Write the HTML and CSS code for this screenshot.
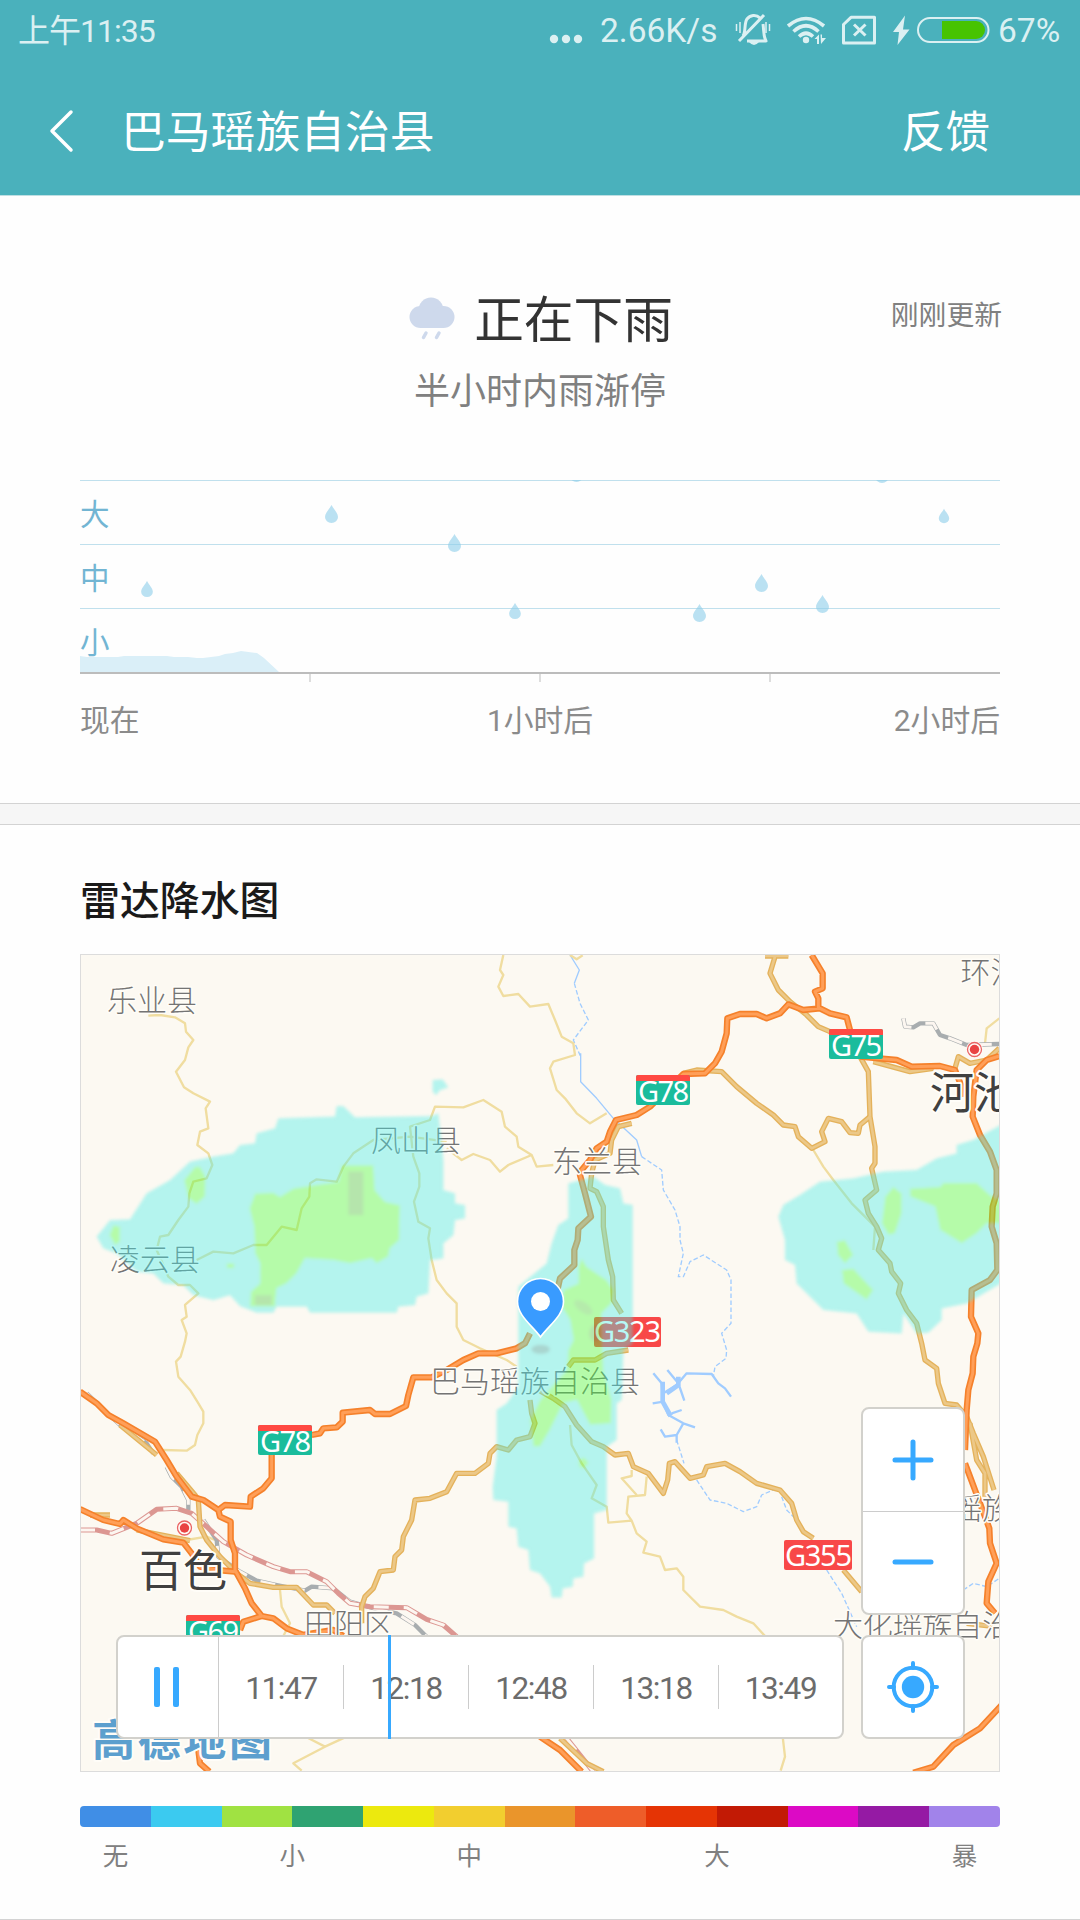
FILE: index.html
```html
<!DOCTYPE html>
<html lang="zh-CN">
<head>
<meta charset="utf-8">
<title>巴马瑶族自治县</title>
<link rel="stylesheet" href="styles.css">
</head>
<body>
<header class="header">
  <div class="status">
    <span class="clock">上午11:35</span>
    <div class="status-right">
      <svg class="dots" width="34" height="30" viewBox="549 15 34 30"><circle cx="554" cy="39" r="4.2"/><circle cx="566" cy="39" r="4.2"/><circle cx="578" cy="39" r="4.2"/></svg>
      <span class="speed">2.66K/s</span>
      <svg class="bell" width="36" height="34" viewBox="735 13 36 34">
        <path class="line" d="M743 36c3-4 1-13 4-17 3-4 9-5 13-1M763 24c1 6 0 11 3 17H747M739 41L764 15"/>
        <path class="thin" d="M736.500 24v7M740 22v11M766 22v11M769.500 24v7"/>
        <path d="M749 42h10q-5 6-10 0z"/>
      </svg>
      <svg class="wifi" width="40" height="30" viewBox="786 15 40 30">
        <g class="wave"><path d="M788 26Q806 11 824 26"/><path d="M793.500 31.500Q806 20 818.500 31.500"/><path d="M799 36.500Q806 30 813 36.500"/></g>
        <circle cx="806" cy="40" r="3.200"/><path d="M814.500 39L819 34.500V44H817V39zM820.500 34.500H822V38H826L821 44z"/>
      </svg>
      <svg class="sim" width="36" height="30" viewBox="841 14 36 30"><path class="line" d="M843.500 42V23.500L851 16.300H874.500V42z"/><path class="cross" d="M854 23.500L865.500 34.500M865.500 23.500L854 34.500"/></svg>
      <svg class="bolt" width="18" height="30" viewBox="892 15 18 30"><path d="M905 15.500L893 32H899L897.500 45L909.500 29.500H903z"/></svg>
      <svg class="battery" width="73" height="28" viewBox="917 16 73 28"><rect class="shell" x="918" y="18" width="70.500" height="24" rx="12"/><path class="charge" d="M942 21H976A9 9 0 0 1 976 39H942z"/></svg>
      <span class="percent">67%</span>
    </div>
  </div>
  <div class="nav">
    <svg class="back" width="26" height="44" viewBox="0 0 26 44"><path d="M22 3L3 22L22 41"/></svg>
    <h1>巴马瑶族自治县</h1>
    <span class="feedback">反馈</span>
  </div>
</header>

<section class="forecast">
  <div class="now">
    <svg width="46" height="44" viewBox="0 0 46 44"><g class="cloud"><circle cx="11.500" cy="20" r="11"/><circle cx="22" cy="13" r="12.500"/><circle cx="34.500" cy="20" r="11"/><rect x="11" y="15" width="24" height="16"/></g><path class="rain" d="M17 36L14.500 40.500M30 36L27.500 40.500"/></svg>
    <h2>正在下雨</h2>
    <span class="updated">刚刚更新</span>
  </div>
  <p class="summary">半小时内雨渐停</p>
  <svg class="chart" width="920" height="204" viewBox="80 480 920 204">
    <defs><path id="drop" d="M0-9C-2-5-6.500-1-6.500 3A6.500 6 0 0 0 6.500 3C6.500-1 2-5 0-9z"/></defs>
    <path class="area" d="M80 656L87 657H118L124 656H167L174 657H188L197 658H203L219 656L225 654L233 653L241 651L257 653L264 658L279 672V673H80z"/>
    <path class="grid" d="M80 480.500H1000M80 544.500H1000M80 608.500H1000"/>
    <path class="axis" d="M80 673H1000"/><path class="ticks" d="M310 674V682M540 674V682M770 674V682"/>
    <g class="drops">
      <use href="#drop" transform="translate(147 589) scale(.9)"/><use href="#drop" x="331.500" y="514"/><use href="#drop" x="454.500" y="543"/>
      <use href="#drop" transform="translate(515 611) scale(.9)"/><use href="#drop" x="576.500" y="473"/><use href="#drop" x="699.500" y="613"/>
      <use href="#drop" x="761.500" y="583"/><use href="#drop" x="822.500" y="604"/><use href="#drop" x="882" y="474"/>
      <use href="#drop" transform="translate(944 516) scale(.8)"/>
    </g>
    <g class="levels"><text x="80" y="525">大</text><text x="80" y="589">中</text><text x="80" y="653">小</text></g>
  </svg>
  <div class="hours"><span>现在</span><span>1小时后</span><span>2小时后</span></div>
</section>

<section class="radar">
  <h3>雷达降水图</h3>
  <div class="map">
    <svg class="tiles" width="918" height="816" viewBox="81 955 918 816">
      <defs>
        <filter id="soften"><feGaussianBlur stdDeviation="5"/></filter>
        <g id="minor">
          <g transform="translate(60 860) scale(.33333)">
            <path d="M265 467L300 465L345 472L375 490L378 515L400 540L385 562L375 600L348 635L372 682L400 700L450 725L437 745L445 805L420 815L412 855L445 880L457 915L440 955L400 965L388 1000L385 1040L355 1080L325 1125L300 1130L290 1170L325 1250L355 1275L390 1275L415 1300L375 1335L380 1370L365 1380L380 1420L375 1445L362 1490L348 1505L355 1550L390 1590L412 1625L430 1655L430 1690L412 1725L405 1755L380 1772L310 1770"/>
            <path d="M1330 285L1320 330L1330 345L1315 380L1330 408L1375 402L1410 440L1465 432L1485 480L1505 530L1540 550L1545 585L1480 605L1470 625L1490 690L1515 715L1550 760L1590 790L1640 760"/>
            <path d="M1160 865L1205 900L1240 882L1290 900L1320 935L1345 915L1415 885L1375 860L1370 830L1335 800L1325 755L1270 720L1210 742L1125 740L1110 780L1050 800L1060 890L1078 940L1078 980L1062 1025L1075 1085L1110 1105L1105 1135L1115 1200L1130 1260L1160 1300L1190 1330L1190 1400L1210 1440L1260 1465L1340 1500L1370 1520M1415 885L1430 920L1480 915"/>
            <path d="M1160 845L1050 830L940 840L880 880L850 920L830 965L770 958L750 970L748 1010L725 1045L710 1110L665 1100L620 1155L580 1155L520 1180L460 1175L410 1200"/>
          </g>
          <g transform="translate(540 940) scale(.33333)"><path d="M820 630L850 680L880 720L935 790L1005 860L1000 930M1378 235L1340 265L1335 310M90 45L110 58L128 46"/></g>
          <g transform="translate(60 1340) scale(.33333)"><path d="M740 1192L795 1220L700 1270L725 1292M795 1220L855 1192M660 750L665 800L690 850L670 888M380 600L440 590L465 600"/></g>
          <g transform="translate(540 1340) scale(.33333)"><path d="M90 255L95 315L125 370L170 435L155 475L200 500L205 548L275 542L260 520L265 470L315 465L320 410M275 390V408L245 415L290 465M275 542L290 580L320 605L310 638L360 650L375 690L410 685L430 710L430 750L480 800L550 810L590 830L640 850L675 888M728 1190L735 1250L722 1292"/></g>
        </g>
        <g id="trunk">
          <g transform="translate(540 940) scale(.33333)">
            <path d="M675 48H745M705 50L690 100L715 150L750 185L800 225L835 260L870 275L960 350L985 395L990 530L1005 620L1005 670L995 685L1010 750L975 780L985 820L1010 860L1025 895L1015 930L1050 970L1055 995L1082 1030L1075 1060L1100 1110L1130 1150L1145 1210L1155 1260L1190 1285L1195 1330L1215 1390L1250 1395L1280 1430L1300 1480L1330 1550L1362 1650M1290 1450L1310 1560L1335 1600L1335 1670"/>
            <path d="M430 400L470 390L545 395L590 440L650 490L700 525L730 555L765 560L775 590L815 625L855 605L845 575L865 535L905 545L930 578L955 580L960 555L990 530M1000 365L1110 395L1180 385M1245 385L1255 350L1290 370L1340 360L1378 325"/>
            <path d="M275 550L235 560L215 600L210 640L165 660L155 700L150 745L170 755L190 800L190 860L205 960L218 1010L220 1080L245 1120M265 1230L200 1240L165 1260H100L85 1280"/>
          </g>
          <g transform="translate(540 1340) scale(.33333)"><path d="M-5 150L40 175L75 200L110 255L155 305L190 320L225 345L265 340L280 380L325 400L370 460L383 420L388 370L405 365L450 415L490 405L500 380L555 370L600 395L650 430L720 450L755 490L770 540L790 575L820 595M910 690L965 755M60 1195L140 1270L190 1295M1280 850L1365 860"/></g>
          <g transform="translate(60 1340) scale(.33333)"><path d="M1410 180L1415 220L1425 250L1410 290L1370 300L1345 330L1310 320L1290 340L1285 370L1245 400H1190L1160 455L1110 475L1065 480L1055 540L1030 590L1025 630L1005 650L1000 690L960 695L940 745L915 770L905 800V850M180 255L290 345M350 400L405 465L415 480L420 560L440 600L480 650L530 700L570 730L640 742H710L760 795H800L825 820M90 525H150M230 570L390 602"/></g>
        </g>
        <g id="highway">
          <g transform="translate(540 940) scale(.33333)">
            <path d="M815 45L830 70L848 100V145L825 155L835 175V205M960 350L1070 360L1115 380L1200 378L1245 390L1265 440L1268 470M930 270L920 232L870 220L840 205L790 210L745 193L720 220L680 235L650 222L600 222L562 235L560 280L545 335L525 370L495 400L430 402L330 500L290 525L228 540L210 575L200 605L170 625L150 660L125 690L120 705L135 760L153 830L115 865L113 900L103 930V975L60 1015L50 1060"/>
            <path d="M1378 348L1340 360L1310 390L1300 470L1298 530L1320 585L1350 635L1370 690V760L1358 800L1355 860L1370 910L1372 990L1350 1020L1295 1050L1293 1130L1315 1180L1312 1210L1300 1250L1298 1300L1285 1350L1280 1410L1275 1530M1275 1570L1290 1610L1305 1650L1335 1730L1348 1765L1350 1810L1370 1870L1345 1925L1340 1990L1365 2020"/>
          </g>
          <g transform="translate(540 1340) scale(.33333)"><path d="M1385 1095L1320 1165L1240 1215L1180 1280L1120 1298M0 1190L60 1230L125 1295"/></g>
          <g transform="translate(60 1340) scale(.33333)">
            <path d="M60 155L110 190L145 225L190 250L285 305L320 360L350 410L395 470L430 480L475 510L480 530L512 545V600L525 640V690L555 745L575 790L605 828L640 835L680 865L730 885L820 870L850 888M475 510L495 495L570 500L572 470L610 445L635 415V345M755 285L780 280L790 265L830 262L848 245V218L930 210L945 222H990L1038 198L1045 165L1060 112H1115L1160 90L1210 60L1255 40H1310L1370 25L1395 10L1410 -20"/>
            <path d="M60 507L130 540L180 552L190 540L230 565L310 598L370 608L395 640L420 680L470 690L525 695M605 828L550 845L540 870M410 1190L420 1270L448 1295"/>
          </g>
        </g>
        <g id="rail">
          <path transform="translate(60 1340) scale(.33333)" d="M80 160L180 255L260 310L280 340M320 380L335 410L365 440L385 480V510M430 540L470 600L475 650L540 695L590 722L650 735L735 752L755 740L820 745L870 785L960 810L1010 820L1065 855L1100 890"/>
          <path transform="translate(540 940) scale(.33333)" d="M1090 235L1095 260L1120 262L1140 250H1180L1200 285L1230 295L1280 315L1378 312"/>
        </g>
        <g id="express">
          <path transform="translate(60 1340) scale(.33333)" d="M60 570H110L155 580L230 550L290 508L350 505L395 520L440 560L490 605L560 645L640 680L690 695H740L800 725L835 760L870 790L930 800L1040 803L1100 838L1150 855L1190 890M1520 1195L1600 1295"/>
        </g>
      </defs>
      <g class="river" transform="translate(540 940) scale(.33333)">
        <path d="M90 45L118 90L103 130M122 340V425L170 475L220 535L290 600L305 650"/>
        <path class="broken" d="M103 130L120 190L145 240L100 300L122 350M305 650L365 690L370 750L405 810L420 860V900L430 940L415 1010H430L450 965L490 945L560 990L573 1020V1150L545 1180L560 1230L558 1255L525 1280L520 1310M410 1500L432 1570M470 1620L510 1680L560 1690L610 1715L650 1700L665 1665L700 1650M725 1670L740 1710L770 1740M860 1890L905 1960L950 2060M1270 1950L1300 1930L1340 1940L1378 1915"/>
        <path class="lake" d="M340 1300L365 1330L370 1390L385 1425L430 1450L465 1462M430 1450L410 1485L375 1490L362 1468M410 1485V1508M370 1360L410 1335L440 1300L515 1302L535 1330L555 1345L573 1370M382 1290L415 1330L422 1350L433 1382M338 1390L370 1385M395 1420L425 1410"/>
        <path class="basin" d="M368 1325V1385L392 1428M415 1310V1335L380 1360"/>
      </g>
      <use href="#minor" class="minor"/>
      <use href="#rail" class="rail"/><use href="#rail" class="rail-gap"/>
      <use href="#express" class="express"/><use href="#express" class="rail-gap"/>
      <use href="#trunk" class="trunk"/><use href="#trunk" class="trunk-core"/>
      <use href="#highway" class="highway"/><use href="#highway" class="highway-core"/>

      <g class="places">
        <text x="107" y="1011">乐业县</text><text x="371" y="1151">凤山县</text><text x="110" y="1270">凌云县</text>
        <text x="552" y="1172">东兰县</text><text x="960.500" y="983">环江</text><text x="430" y="1392" textLength="210">巴马瑶族自治县</text>
        <text x="304" y="1635">田阳区</text><text x="833" y="1636" textLength="209">大化瑶族自治县</text><text x="952" y="1519">瑶族</text>
      </g>
      <g class="city"><text x="930" y="1109">河池</text><text x="139" y="1587">百色</text></g>
      <g class="stop"><circle class="halo" cx="974.500" cy="1049.500" r="8.500"/><circle class="ring" cx="974.500" cy="1049.500" r="7"/><circle cx="974.500" cy="1049.500" r="4.700"/><circle class="halo" cx="184.500" cy="1528" r="8.500"/><circle class="ring" cx="184.500" cy="1528" r="7"/><circle cx="184.500" cy="1528" r="4.700"/></g>
      <g class="shields">
        <g class="national"><rect x="636" y="1075" width="54" height="30" rx="2"/><rect x="829" y="1029" width="54" height="30" rx="2"/><rect x="258" y="1425" width="54" height="30" rx="2"/><rect x="186" y="1615" width="54" height="30" rx="2"/></g>
        <path class="cap" d="M636 1081V1077Q636 1075 638 1075H688Q690 1075 690 1077V1081zM829 1035V1031Q829 1029 831 1029H881Q883 1029 883 1031V1035zM258 1431V1427Q258 1425 260 1425H310Q312 1425 312 1427V1431zM186 1621V1617Q186 1615 188 1615H238Q240 1615 240 1617V1621z"/>
        <g class="provincial"><rect x="594" y="1317" width="67" height="30" rx="2"/><rect x="784" y="1540" width="68" height="30" rx="2"/></g>
        <g class="codes"><text x="638" y="1102" textLength="51">G78</text><text x="831" y="1056" textLength="51">G75</text><text x="260" y="1452" textLength="51">G78</text><text x="188" y="1642" textLength="51">G69</text><text x="594" y="1342" textLength="67">G323</text><text x="785" y="1566" textLength="67">G355</text></g>
      </g>
      <text class="brand" x="92" y="1756" textLength="180">高德地图</text>

      <g class="echo">
        <g transform="translate(60 860) scale(.33333)" filter="url(#soften)">
          <path class="light" d="M110 1130L150 1080L210 1078L260 1000L330 960L390 905L460 890L520 880L540 855L585 850L590 820L645 805L655 775L825 770L830 738H850L885 772L1115 768L1135 760L1150 900V990L1185 1000V1030L1215 1035V1075L1185 1080L1180 1125L1150 1150V1195L1110 1200L1105 1300L1070 1310L1065 1335L1015 1340L1010 1358H750L740 1340H650L640 1358H590L540 1338L510 1305L460 1320L400 1305L370 1275L310 1270L280 1240L230 1235L170 1180L130 1165zM1118 660L1148 658L1165 682L1140 690L1128 705L1118 695z"/>
          <path class="mid" d="M585 1000L640 998L660 1010L700 985L760 975L835 965L845 915H940L945 990L975 1025L1020 1035L1018 1140L990 1165L985 1190L950 1210L935 1195L870 1210L820 1200L735 1195L710 1240L680 1270L650 1285L645 1340H570L572 1295L600 1270V1210L585 1180L582 1100L568 1045zM405 920H420L437 950L435 1010L410 1032L385 1015L372 960zM160 1095L180 1100V1145L165 1155L148 1125zM500 1210H522V1224H500z"/>
          <path class="dense" d="M865 935H910V1065H865zM585 1305H635V1335H585z"/>
        </g>
        <g transform="translate(480 1170) scale(.33333)" filter="url(#soften)">
          <path class="light" d="M265 40L340 20L375 45L420 55L430 100L458 105V520L430 540L425 690L410 700V810L380 830V1020L342 1030V1165L312 1180L310 1220L280 1225L278 1250L248 1255L245 1282H215L210 1250L180 1210L150 1200L145 1140L115 1130L110 1075L85 1070V995L40 990L38 950L50 860V720L80 700L115 650V350L200 280L215 220L235 165L265 145z"/>
          <path class="mid" d="M305 265L320 290L380 330L400 360L395 400L365 430L370 600L395 690L393 760L330 765L290 690L250 700L210 780L180 830H160L150 750L180 690L260 600L265 540L280 510L270 450L245 410L250 360L295 340V290zM296 870L312 862L326 878L312 896L298 890z"/>
          <g class="dense"><ellipse cx="310" cy="412" rx="32" ry="15" opacity=".7" transform="rotate(35 310 412)"/><ellipse class="deep" cx="182" cy="538" rx="28" ry="14"/><ellipse cx="345" cy="490" rx="18" ry="25"/></g>
        </g>
        <g transform="translate(540 940) scale(.33333)" filter="url(#soften)">
          <path class="light" d="M1400 545L1300 600L1250 615V640L1190 655L1130 690L1030 695L940 715L840 725L780 765L730 795L715 830L735 900V960L765 975L770 1030L850 1110L950 1120L985 1175L1085 1180L1090 1120L1130 1180L1165 1178L1205 1140V1105L1280 1090L1400 1020z"/>
          <path class="mid" d="M1110 745L1200 740L1210 728H1310L1350 765L1400 790V850H1340L1310 880L1265 910L1200 870L1185 800L1110 770zM1060 740L1085 760V820L1065 880L1045 885L1025 850L1035 770zM890 905L915 900L940 945L915 970L893 945zM905 990L940 985L1000 1050L980 1080L910 1030z"/>
        </g>
      </g>
      <g class="pin"><path d="M540.500 1337C533 1326 517.500 1316 517.500 1301.500A23 23 0 0 1 563.500 1301.500C563.500 1316 548 1326 540.500 1337z"/><circle cx="540.500" cy="1301.500" r="9.500"/></g>
    </svg>
    <div class="controls">
      <div class="timeline">
        <div class="pause"><i></i><i></i></div>
        <span>11:47</span><span>12:18</span><span>12:48</span><span>13:18</span><span>13:49</span>
        <div class="playhead"></div>
      </div>
      <div class="buttons">
        <div class="zoom">
          <div class="btn"><svg width="42" height="42" viewBox="0 0 42 42"><path d="M3 21H39M21 3V39"/></svg></div>
          <div class="btn"><svg width="42" height="42" viewBox="0 0 42 42"><path d="M3 21H39"/></svg></div>
        </div>
        <div class="locate"><svg width="54" height="54" viewBox="0 0 54 54"><circle class="ring" cx="27" cy="27" r="19.300"/><circle class="dot" cx="27" cy="27" r="11.200"/><path d="M27 3V8M27 46V51M3 27H8M46 27H51"/></svg></div>
      </div>
    </div>
  </div>
  <div class="scale"><i class="s1"></i><i class="s2"></i><i class="s3"></i><i class="s4"></i><i class="s5"></i><i class="s6"></i><i class="s7"></i><i class="s8"></i><i class="s9"></i><i class="s10"></i><i class="s11"></i><i class="s12"></i><i class="s13"></i></div>
  <div class="legend"><span class="none">无</span><span class="small">小</span><span class="medium">中</span><span class="large">大</span><span class="storm">暴</span></div>
</section>
</body>
</html>
```
FILE: styles.css
```css
* { box-sizing: border-box; margin: 0; padding: 0; }
body { width: 1080px; height: 1920px; display: flex; flex-direction: column; background: #fefefe; font-family: "Noto Sans CJK SC", sans-serif; font-weight: 400; color: #808080; overflow: hidden; border-bottom: 1px solid #d3d3d3; }
svg { display: block; flex: none; }
h1, h2, h3 { font-weight: inherit; white-space: nowrap; }

.header { height: 196px; flex: none; background: #4ab1bc; color: #fff; border-bottom: 1px solid #bfdfe3; }
.status { height: 64px; display: flex; justify-content: space-between; padding: 0 18px 4px 18px; color: #dbf0f2; }
.status span { line-height: 60px; padding-top: 1px; font-family: Roboto, "Noto Sans CJK SC", sans-serif; font-weight: 400; font-size: 33.5px; white-space: nowrap; }
.status .clock { font-size: 32px; letter-spacing: -1px; }
.status-right { display: flex; align-items: center; }
.status-right svg { fill: #dbf0f2; }
.status-right .speed { width: 118px; margin-left: 17px; }
.status-right .percent { width: 64px; margin-left: 8px; }
.bell { margin-left: 17px; }
.wifi { margin-left: 15px; }
.sim { margin-left: 15px; }
.bolt { margin-left: 15px; }
.battery { margin-left: 7px; }
.line { fill: none; stroke: #dbf0f2; stroke-width: 3; stroke-linejoin: round; }
.thin { stroke: #dbf0f2; stroke-width: 1.5; }
.wave { fill: none; stroke: #dbf0f2; stroke-width: 3.6; }
.cross { stroke: #dbf0f2; stroke-width: 3; }
.shell { fill: none; stroke: #dbf0f2; stroke-width: 2; }
.charge { fill: #47c302; }
.nav { height: 130px; display: flex; align-items: center; padding: 0 90px 0 49px; font-size: 44.5px; }
.back { margin-top: 4px; fill: none; stroke: #fff; stroke-width: 3.5; stroke-linecap: round; stroke-linejoin: round; }
.nav h1 { margin-left: 46px; font-size: 44.8px; line-height: 64px; }
.feedback { margin-left: auto; line-height: 64px; }

.forecast { height: 607px; flex: none; padding: 89px 80px 0; }
.now { height: 62px; display: flex; align-items: center; justify-content: center; position: relative; }
.now svg { margin: 5px 0 0 2px; }
.cloud { fill: #ced9ec; }
.rain { stroke: #ced9ec; stroke-width: 3.5; stroke-linecap: round; }
.now h2 { font-size: 49.7px; line-height: 62px; margin-left: 19px; color: #333; }
.updated { position: absolute; right: -2px; top: 8px; font-size: 27.8px; line-height: 40px; }
.summary { margin-top: 16px; font-size: 36px; line-height: 50px; text-align: center; }
.chart { margin-top: 67px; }
.area { fill: #daeff8; }
.grid { stroke: #c0e0ed; }
.axis { stroke: #bcbcbc; stroke-width: 2; }
.ticks { stroke: #ddd; stroke-width: 2; }
.drops { fill: #8ccdea; fill-opacity: .6; }
.levels { fill: #72b5d3; font-size: 29.5px; }
.hours { display: grid; grid-template-columns: 1fr 1fr 1fr; margin-top: 15px; font-family: Roboto, "Noto Sans CJK SC", sans-serif; font-size: 29.8px; line-height: 44px; color: #8b8b8b; text-align: center; }
.hours span:first-child { text-align: left; }
.hours span:last-child { text-align: right; }

.radar { flex: 1; padding: 48px 80px 0; border-top: 1px solid #d3d3d3; }
.radar::before { content: ""; display: block; height: 20px; margin: -48px -80px 48px; background: #f6f6f6; border-bottom: 1px solid #d3d3d3; }
.radar h3 { font-size: 39.9px; line-height: 50px; font-weight: 500; color: #1a1a1a; }
.map { position: relative; width: 920px; height: 818px; margin-top: 31px; border: 1px solid #dcdcdc; background: #fcf9f2; overflow: hidden; }
.tiles use, .river path { fill: none; stroke-linejoin: round; }
.river { stroke: #a0ccff; stroke-width: 4; fill: none; }
.river .broken { stroke-width: 4; stroke-dasharray: 14 7; }
.river .lake { stroke-width: 7; }
.river .basin { stroke-width: 14; }
.minor { stroke: #f0dda0; stroke-width: 7; }
.rail { stroke: #a8adaf; stroke-width: 13; }
.express { stroke: #dc9792; stroke-width: 15; }
.rail-gap { stroke: #fcf6f0; stroke-width: 9; stroke-dasharray: 45; }
.trunk { stroke: #e4b25b; stroke-width: 16; }
.trunk-core { stroke: #ecc888; stroke-width: 8; }
.highway { stroke: #f5812b; stroke-width: 19; }
.highway-core { stroke: #ff9f58; stroke-width: 9; }
.places, .city, .brand { stroke: #fffdf8; paint-order: stroke; stroke-linejoin: round; }
.places { fill: #747474; font-size: 30px; font-weight: 300; stroke-width: 3px; }
.city { fill: #404040; font-size: 44px; stroke-width: 4px; }
.brand { fill: #5c9fce; font-size: 43px; font-weight: 700; stroke-width: 4px; }
.stop { fill: #e94343; }
.stop .halo { fill: #fffaf5; }
.stop .ring { fill: none; stroke: #ea6565; stroke-width: 1.3; }
.national { fill: #1abc9c; }
.provincial { fill: #f84848; }
.cap { fill: #ff4a43; }
.codes { fill: #fff; font-family: "Noto Sans", sans-serif; font-size: 29px; font-weight: 400; }
.echo { opacity: .4; }
.light { fill: #4aede8; }
.mid { fill: #4bff3e; }
.dense { fill: #4bc844; }
.deep { fill: #2da39e; }
.pin { fill: #399bff; }
.pin path { stroke: #fff; stroke-width: 1.6; }
.pin circle { fill: #fff; }

.controls { position: absolute; left: 35px; right: 34px; bottom: 32px; display: flex; align-items: flex-end; justify-content: space-between; }
.timeline { position: relative; width: 728px; height: 104px; display: flex; align-items: center; background: #fff; border: 2px solid #d2d1cc; border-radius: 8px; }
.pause { flex: none; width: 101px; height: 100%; display: flex; gap: 13px; align-items: center; justify-content: center; padding-right: 3px; border-right: 1px solid #ccc; }
.pause i { width: 6px; height: 40px; border-radius: 2px; background: #37a9ff; }
.timeline span { flex: none; width: 125px; height: 44px; line-height: 47px; text-align: center; font-family: Roboto, sans-serif; font-size: 31.5px; letter-spacing: -1.4px; color: #6c6c6c; border-right: 1px solid #ccc; }
.timeline span:nth-of-type(5) { width: 123px; border-right: none; }
.playhead { position: absolute; left: 270px; top: -2px; width: 3px; height: 104px; background: #37a9ff; }
.buttons { display: flex; flex-direction: column; gap: 20px; }
.zoom, .locate { width: 104px; background: #fff; border: 2px solid #d2d1cc; border-radius: 8px; }
.zoom { height: 208px; display: flex; flex-direction: column; }
.btn { flex: 1; display: flex; align-items: center; justify-content: center; }
.btn:first-child { border-bottom: 1px solid #ccc; }
.btn path, .locate path, .locate .ring { fill: none; stroke: #37a9ff; stroke-width: 5; stroke-linecap: round; }
.locate { height: 104px; display: flex; align-items: center; justify-content: center; }
.locate path, .locate .ring { stroke-width: 4; }
.dot { fill: #37a9ff; }

.scale { display: flex; height: 21px; margin-top: 34px; border-radius: 4px; overflow: hidden; }
.scale i { flex: 1; }
.s1 { background: #408ee6; } .s2 { background: #3bcaf0; } .s3 { background: #a0e242; } .s4 { background: #2fa372; }
.s5 { background: #ece90e; } .s6 { background: #f2ce2f; } .s7 { background: #ea952b; } .s8 { background: #ee5d29; }
.s9 { background: #e53405; } .s10 { background: #c21a05; } .s11 { background: #dc0ac5; } .s12 { background: #951aa4; } .s13 { background: #a183ea; }
.legend { display: grid; grid-template-columns: repeat(26, 1fr); margin-top: 9px; font-size: 25.500px; line-height: 36px; text-align: center; }
.none { grid-column: 1 / 3; } .small { grid-column: 6 / 8; } .medium { grid-column: 11 / 13; } .large { grid-column: 18 / 20; } .storm { grid-column: 25 / 27; }
```
